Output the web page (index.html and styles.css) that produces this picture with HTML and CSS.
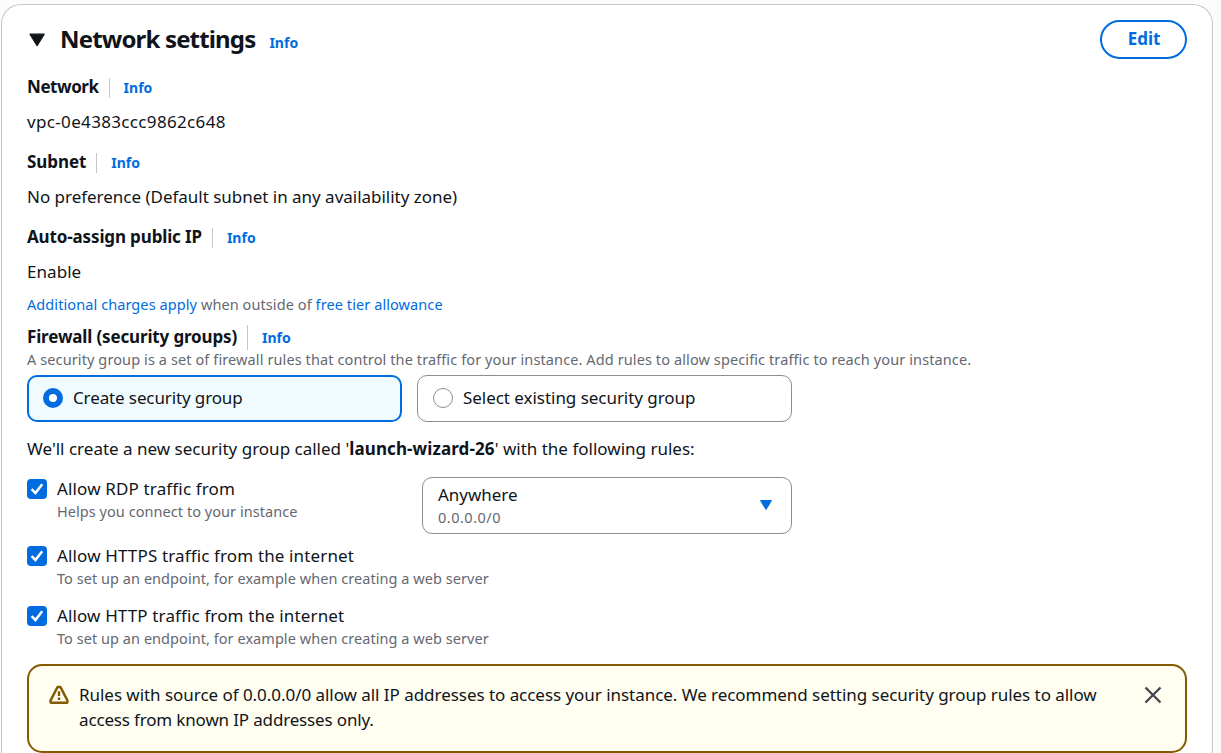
FILE: index.html
```html
<!DOCTYPE html>
<html lang="en">
<head>
<meta charset="utf-8">
<title>Network settings</title>
<link rel="stylesheet" href="styles.css">
</head>
<body>
<main class="card">
  <header class="card-header">
    <svg class="caret" width="16" height="14" viewBox="0 0 16 14"><path d="M1 1.2h14.2L8.1 12.6z" fill="#0f141a" stroke="#0f141a" stroke-width="1.2" stroke-linejoin="round"/></svg>
    <h2 class="title">Network settings</h2>
    <a class="info info-title">Info</a>
    <button class="edit">Edit</button>
  </header>

  <section class="field">
    <div class="label-row"><span class="label t-network">Network</span><a class="info divided">Info</a></div>
    <div class="value t-vpc">vpc-0e4383ccc9862c648</div>
  </section>
  <section class="field">
    <div class="label-row"><span class="label t-subnet">Subnet</span><a class="info divided">Info</a></div>
    <div class="value t-pref">No preference (Default subnet in any availability zone)</div>
  </section>
  <section class="field">
    <div class="label-row"><span class="label t-auto">Auto-assign public IP</span><a class="info divided">Info</a></div>
    <div class="value t-enable">Enable</div>
  </section>
  <p class="charges small"><a>Additional charges apply</a> when outside of <a>free tier allowance</a></p>

  <section class="firewall">
    <div class="label-row"><span class="label t-firewall">Firewall (security groups)</span><a class="info divided tall">Info</a></div>
    <p class="small description">A security group is a set of firewall rules that control the traffic for your instance. Add rules to allow specific traffic to reach your instance.</p>
    <div class="tiles">
      <label class="tile selected"><span class="radio"></span><span class="tile-text t-create">Create security group</span></label>
      <label class="tile"><span class="radio"></span><span class="tile-text">Select existing security group</span></label>
    </div>
  </section>

  <p class="summary">We'll create a new security group called '<b>launch-wizard-26</b>' with the following rules:</p>

  <div class="rule rule-rdp">
    <svg class="check" width="20" height="20" viewBox="0 0 20 20"><rect width="20" height="20" rx="4" fill="#006ce0"/><path d="M4.6 10.2 8.4 14 15.2 5.2" fill="none" stroke="#fff" stroke-width="2.5"/></svg>
    <div class="rule-text"><div class="t-rdp">Allow RDP traffic from</div><div class="small t-helps">Helps you connect to your instance</div></div>
    <div class="select">
      <div class="select-value"><div>Anywhere</div><div class="small t-cidr">0.0.0.0/0</div></div>
      <svg class="select-arrow" width="14" height="12" viewBox="0 0 14 12"><path d="M1.5 1.5h11L7 10.5z" fill="#006ce0" stroke="#006ce0" stroke-width="1" stroke-linejoin="round"/></svg>
    </div>
  </div>
  <div class="rule">
    <svg class="check" width="20" height="20" viewBox="0 0 20 20"><rect width="20" height="20" rx="4" fill="#006ce0"/><path d="M4.6 10.2 8.4 14 15.2 5.2" fill="none" stroke="#fff" stroke-width="2.5"/></svg>
    <div class="rule-text"><div class="t-https">Allow HTTPS traffic from the internet</div><div class="small t-setup">To set up an endpoint, for example when creating a web server</div></div>
  </div>
  <div class="rule">
    <svg class="check" width="20" height="20" viewBox="0 0 20 20"><rect width="20" height="20" rx="4" fill="#006ce0"/><path d="M4.6 10.2 8.4 14 15.2 5.2" fill="none" stroke="#fff" stroke-width="2.5"/></svg>
    <div class="rule-text"><div class="t-http">Allow HTTP traffic from the internet</div><div class="small t-setup">To set up an endpoint, for example when creating a web server</div></div>
  </div>

  <div class="alert">
    <svg class="warning" width="20" height="20" viewBox="0 0 20 20" fill="none" stroke="#855900" stroke-width="2.4" stroke-linejoin="round"><path d="M9 2h2q.5 0 .8.6L18.5 15.6q.4 2-1 2.2h-15q-1.400-.2-1-2.200L8.200 2.600Q8.500 2 9 2z"/><path d="M10 6.200v4.800M10 12.500v2.500"/></svg>
    <div class="alert-text"><div>Rules with source of 0.0.0.0/0 allow all IP addresses to access your instance. We recommend setting security group rules to allow</div><div class="t-alert2">access from known IP addresses only.</div></div>
    <svg class="close" width="18" height="18" viewBox="0 0 18 18"><path d="M1.5 1.5l15 15M16.5 1.5l-15 15" stroke="#424650" stroke-width="2.3"/></svg>
  </div>
</main>
</body>
</html>
```
FILE: styles.css
```css
* { box-sizing: border-box; }
body {
  margin: 0;
  padding: 4px 8px 0 1px;
  background: #fcfcfd;
  color: #0f141a;
  font: 17px/25px "Noto Sans", "Open Sans", sans-serif;
  letter-spacing: -0.04px;
  white-space: nowrap;
}
p, h2 { margin: 0; }
a { color: #006ce0; }
.card {
  height: 749px;
  padding: 15px 25px 0;
  background: #fff;
  border: 1px solid #c6c6cd;
  border-bottom: 0;
  border-radius: 20px 20px 0 0;
}
.card-header { display: flex; height: 39px; align-items: center; }
.caret { margin: 1px 0 0 2px; }
.title {
  margin-left: 15px;
  padding-bottom: 2px;
  font-size: 24px;
  line-height: 30px;
  letter-spacing: -0.84px;
}
.info { font-size: 14px; font-weight: 700; letter-spacing: 0; }
.info-title { margin: 6px 0 0 14px; }
.edit {
  width: 87px;
  height: 39px;
  margin-left: auto;
  padding: 0 0 2px 1px;
  background: #fff;
  color: #006ce0;
  border: 2px solid #006ce0;
  border-radius: 20px;
  font: 700 17px/25px "Noto Sans", sans-serif;
}
.field { height: 75px; padding-top: 15px; }
.label-row { display: flex; height: 25px; align-items: center; }
.label { font-weight: 700; }
.divided {
  height: 20px;
  margin: 2px 0 0 10px;
  padding-left: 14px;
  border-left: 1px solid #c6c6cd;
  line-height: 19px;
}
.divided.tall { height: 25px; line-height: 26px; }
.value { margin-top: 10px; }
.small { color: #656871; font-size: 14.5px; line-height: 20px; letter-spacing: 0.085px; }
.charges { margin-top: 10px; }
.firewall { padding-top: 10px; }
.description { letter-spacing: 0.106px; }
.tiles { display: flex; gap: 15px; margin-top: 6px; }
.tile {
  display: flex;
  width: 375px;
  height: 47px;
  align-items: center;
  gap: 10px;
  padding: 0 15px 1px;
  border: 1px solid #8c8c94;
  border-radius: 10px;
}
.tile.selected { padding: 0 14px 1px; border: 2px solid #006ce0; background: #f0fbff; }
.tile-text { padding-bottom: 2px; }
.radio { width: 20px; height: 20px; border: 1px solid #8c8c94; border-radius: 50%; background: #fff; }
.selected .radio { border: 6px solid #006ce0; }
.summary { margin-top: 14px; letter-spacing: 0.005px; }
.summary b { letter-spacing: 0.1px; }
.rule { display: flex; height: 60px; }
.rule-rdp { height: 67px; margin-top: 15px; }
.check { margin: 3px 10px 0 0; }
.rule-text { width: 365px; }
.select {
  display: flex;
  width: 370px;
  height: 57px;
  margin-top: 1px;
  align-items: center;
  justify-content: space-between;
  padding: 0 18px 0 15px;
  border: 1px solid #8c8c94;
  border-radius: 10px;
}
.select-value, .select-arrow { margin-bottom: 2px; }
.alert {
  display: flex;
  height: 89px;
  margin-top: 1px;
  padding: 16px 23px 0 20px;
  border: 2px solid #855900;
  border-radius: 15px;
  background: #fffef0;
}
.warning { margin: 3px 10px 0 0; }
.alert-text { flex: 1; letter-spacing: -0.042px; }
.close { margin-top: 4px; }

/* Tracking for individual strings */
.t-network { letter-spacing: -0.44px; }
.t-vpc { letter-spacing: 0.34px; }
.t-pref { letter-spacing: -0.02px; }
.t-enable { letter-spacing: 0.05px; }
.t-subnet { letter-spacing: -0.07px; }
.t-auto { letter-spacing: -0.14px; }
.t-firewall { letter-spacing: -0.15px; }
.t-create { letter-spacing: -0.12px; }
.t-rdp { letter-spacing: 0.15px; }
.t-https { letter-spacing: 0.14px; }
.t-http { letter-spacing: 0.13px; }
.t-helps, .t-setup { letter-spacing: 0.05px; }
.t-cidr { letter-spacing: 0.5px; }
.t-alert2 { letter-spacing: -0.16px; }
```
